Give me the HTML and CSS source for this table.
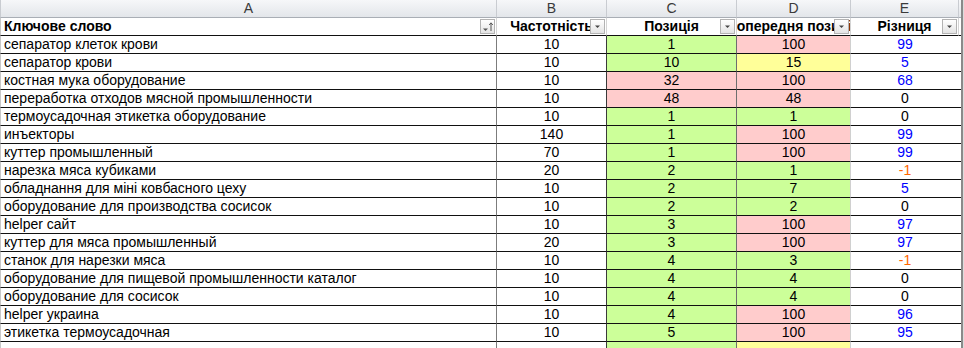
FILE: index.html
```html
<!DOCTYPE html>
<html lang="uk">
<head>
<meta charset="utf-8">
<title>Ключові слова</title>
<link rel="stylesheet" href="styles.css">
</head>
<body>
<div class="sheet">
  <div class="row letters">
    <div class="cell">A</div><div class="cell">B</div><div class="cell">C</div><div class="cell">D</div><div class="cell">E</div><div class="cell"></div><div class="edge"></div>
  </div>
  <div class="row head">
    <div class="cell a"><span class="t">Ключове слово</span><span class="fbtn"><svg width="13" height="13" viewBox="0 0 13 13"><path d="M2 8.5h5l-2.5 2.5z" fill="#555"/><path d="M10 3v8M8.2 5 10 2.8 11.8 5" stroke="#555" stroke-width="1" fill="none"/></svg></span></div>
    <div class="cell b"><span class="t">Частотність</span><span class="fbtn"><svg width="13" height="13" viewBox="0 0 13 13"><path d="M4 5.5h5l-2.5 2.5z" fill="#444"/></svg></span></div>
    <div class="cell c"><span class="t">Позиція</span><span class="fbtn"><svg width="13" height="13" viewBox="0 0 13 13"><path d="M4 5.5h5l-2.5 2.5z" fill="#444"/></svg></span></div>
    <div class="cell d"><span class="t">Попередня позиція</span><span class="fbtn"><svg width="13" height="13" viewBox="0 0 13 13"><path d="M4 5.5h5l-2.5 2.5z" fill="#444"/></svg></span></div>
    <div class="cell e"><span class="t">Різниця</span><span class="fbtn"><svg width="13" height="13" viewBox="0 0 13 13"><path d="M4 5.5h5l-2.5 2.5z" fill="#444"/></svg></span></div>
    <div class="cell f"></div><div class="edge"></div>
  </div>

  <div class="row data"><div class="cell a">сепаратор клеток крови</div><div class="cell b">10</div><div class="cell c green">1</div><div class="cell d pink">100</div><div class="cell e blue">99</div><div class="cell f"></div><div class="edge"></div></div>
  <div class="row data"><div class="cell a">сепаратор крови</div><div class="cell b">10</div><div class="cell c green">10</div><div class="cell d yellow">15</div><div class="cell e blue">5</div><div class="cell f"></div><div class="edge"></div></div>
  <div class="row data"><div class="cell a">костная мука оборудование</div><div class="cell b">10</div><div class="cell c pink">32</div><div class="cell d pink">100</div><div class="cell e blue">68</div><div class="cell f"></div><div class="edge"></div></div>
  <div class="row data"><div class="cell a">переработка отходов мясной промышленности</div><div class="cell b">10</div><div class="cell c pink">48</div><div class="cell d pink">48</div><div class="cell e">0</div><div class="cell f"></div><div class="edge"></div></div>
  <div class="row data"><div class="cell a">термоусадочная этикетка оборудование</div><div class="cell b">10</div><div class="cell c green">1</div><div class="cell d green">1</div><div class="cell e">0</div><div class="cell f"></div><div class="edge"></div></div>
  <div class="row data"><div class="cell a">инъекторы</div><div class="cell b">140</div><div class="cell c green">1</div><div class="cell d pink">100</div><div class="cell e blue">99</div><div class="cell f"></div><div class="edge"></div></div>
  <div class="row data"><div class="cell a">куттер промышленный</div><div class="cell b">70</div><div class="cell c green">1</div><div class="cell d pink">100</div><div class="cell e blue">99</div><div class="cell f"></div><div class="edge"></div></div>
  <div class="row data"><div class="cell a">нарезка мяса кубиками</div><div class="cell b">20</div><div class="cell c green">2</div><div class="cell d green">1</div><div class="cell e orange">-1</div><div class="cell f"></div><div class="edge"></div></div>
  <div class="row data"><div class="cell a">обладнання для міні ковбасного цеху</div><div class="cell b">10</div><div class="cell c green">2</div><div class="cell d green">7</div><div class="cell e blue">5</div><div class="cell f"></div><div class="edge"></div></div>
  <div class="row data"><div class="cell a">оборудование для производства сосисок</div><div class="cell b">10</div><div class="cell c green">2</div><div class="cell d green">2</div><div class="cell e">0</div><div class="cell f"></div><div class="edge"></div></div>
  <div class="row data"><div class="cell a">helper сайт</div><div class="cell b">10</div><div class="cell c green">3</div><div class="cell d pink">100</div><div class="cell e blue">97</div><div class="cell f"></div><div class="edge"></div></div>
  <div class="row data"><div class="cell a">куттер для мяса промышленный</div><div class="cell b">20</div><div class="cell c green">3</div><div class="cell d pink">100</div><div class="cell e blue">97</div><div class="cell f"></div><div class="edge"></div></div>
  <div class="row data"><div class="cell a">станок для нарезки мяса</div><div class="cell b">10</div><div class="cell c green">4</div><div class="cell d green">3</div><div class="cell e orange">-1</div><div class="cell f"></div><div class="edge"></div></div>
  <div class="row data"><div class="cell a">оборудование для пищевой промышленности каталог</div><div class="cell b">10</div><div class="cell c green">4</div><div class="cell d green">4</div><div class="cell e">0</div><div class="cell f"></div><div class="edge"></div></div>
  <div class="row data"><div class="cell a">оборудование для сосисок</div><div class="cell b">10</div><div class="cell c green">4</div><div class="cell d green">4</div><div class="cell e">0</div><div class="cell f"></div><div class="edge"></div></div>
  <div class="row data"><div class="cell a">helper украина</div><div class="cell b">10</div><div class="cell c green">4</div><div class="cell d pink">100</div><div class="cell e blue">96</div><div class="cell f"></div><div class="edge"></div></div>
  <div class="row data"><div class="cell a">этикетка термоусадочная</div><div class="cell b">10</div><div class="cell c green">5</div><div class="cell d pink">100</div><div class="cell e blue">95</div><div class="cell f"></div><div class="edge"></div></div>
  <div class="row data"><div class="cell a"></div><div class="cell b"></div><div class="cell c green"></div><div class="cell d yellow"></div><div class="cell e"></div><div class="cell f"></div><div class="edge"></div></div>
</div>
</body>
</html>
```

FILE: styles.css
```css
html, body {
  margin: 0;
  padding: 0;
  background: #ffffff;
}
body {
  font-family: "Liberation Sans", Arial, sans-serif;
  font-size: 14px;
  color: #000;
  width: 964px;
  height: 348px;
  overflow: hidden;
}
.sheet {
  display: flex;
  flex-direction: column;
}
.row {
  display: grid;
  grid-template-columns: 497px 110px 130px 114px 108px 2px 3px;
  height: 18px;
}
.cell {
  box-sizing: border-box;
  height: 18px;
  overflow: hidden;
  white-space: nowrap;
}
.edge {
  background: linear-gradient(to right, #8a8a8a 0, #8a8a8a 2px, #dcdcdc 2px);
}

/* column letters */
.letters .cell {
  background: linear-gradient(#f6f7f9, #e3e6ea);
  border-right: 1px solid #c9ccd1;
  border-bottom: 1px solid #a9aeb5;
  color: #3a3a3a;
  text-align: center;
  line-height: 17px;
  font-size: 14px;
}
.letters .cell:first-child { border-left: 1px solid #c9ccd1; }
.letters .cell:nth-child(6) { border-right: none; }

/* header row */
.head .cell {
  position: relative;
  font-weight: bold;
  border-bottom: 1px solid #111;
  border-right: 1px solid #d4d4d4;
  line-height: 17px;
  display: flex;
  justify-content: center;
}
.head .cell.a {
  justify-content: flex-start;
  padding-left: 3px;
  border-left: 1px solid #c8c8c8;
}
.head .cell.f { border-right: none; }
.t { flex: none; }
.fbtn {
  position: absolute;
  right: 1px;
  top: 1px;
  width: 15px;
  height: 15px;
  box-sizing: border-box;
  border: 1px solid #b3b3b3;
  background: linear-gradient(#ffffff, #e4e4e4);
  display: flex;
  align-items: center;
  justify-content: center;
}
.fbtn svg { display: block; }
.head .cell.e .fbtn { right: 1px; }

/* data rows */
.data .cell {
  border-bottom: 1px solid #111;
  line-height: 17px;
  text-align: center;
}
.data .cell.a {
  text-align: left;
  padding-left: 3px;
  border-left: 1px solid #c8c8c8;
  border-right: 1px solid #7c7c7c;
}
.data .cell.b { border-right: 1px solid #3a3a3a; }
.data .cell.c { border-right: 1px solid #6e6e6e; }
.data .cell.d { border-right: 1px solid #d0d0d0; }
.data .cell.e { border-right: none; }

.green { background: #ccff99; }
.pink { background: #ffcccc; }
.yellow { background: #ffff99; }
.blue { color: #0000ff; }
.orange { color: #ff6600; }
```
